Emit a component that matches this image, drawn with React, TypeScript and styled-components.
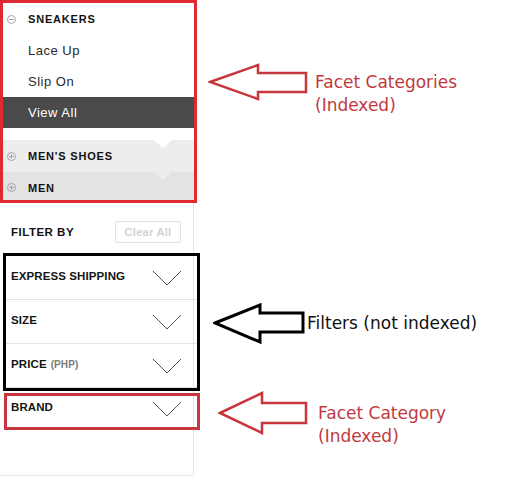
import React from 'react';
import styled, { createGlobalStyle } from 'styled-components';

const GlobalStyle = createGlobalStyle`
  html, body {
    margin: 0;
    padding: 0;
    background: #fff;
  }
  body {
    font-family: "Liberation Sans", Arial, sans-serif;
  }
`;

const Page = styled.div`
  display: flex;
  width: 520px;
  height: 482px;
  overflow: hidden;
  background: #fff;
`;

const Sidebar = styled.div`
  width: 200px;
  flex-shrink: 0;
  display: flex;
  flex-direction: column;
`;

const CategoryBox = styled.div`
  width: 197px;
  height: 203px;
  box-sizing: border-box;
  border: 3px solid #dd2a33;
  display: flex;
  flex-direction: column;
`;

const CategoryHead = styled.div<{ $bg: string; $h: number; $notch?: string; $top?: number }>`
  position: relative;
  display: flex;
  align-items: center;
  height: ${p => p.$h}px;
  padding: ${p => p.$top ?? 0}px 0 0 4px;
  box-sizing: border-box;
  background: ${p => p.$bg};
  color: #111;
  font-size: 11px;
  font-weight: bold;
  letter-spacing: 0.8px;

  &::before {
    content: '';
    display: ${p => (p.$notch ? 'block' : 'none')};
    position: absolute;
    top: 0;
    left: 151px;
    border-left: 9px solid transparent;
    border-right: 9px solid transparent;
    border-top: 8px solid ${p => p.$notch};
  }
`;

const Toggle = styled.svg`
  width: 9px;
  height: 9px;
  margin-right: 12px;
  flex-shrink: 0;
`;

const SubItem = styled.div<{ $active?: boolean }>`
  display: flex;
  align-items: center;
  height: 31px;
  padding-left: 25px;
  font-size: 13px;
  letter-spacing: 0.5px;
  color: ${p => (p.$active ? '#fff' : '#2a2a2a')};
  background: ${p => (p.$active ? '#4a4a4a' : 'transparent')};
`;

const CollapsedGroup = styled.div`
  margin-top: 12px;
  display: flex;
  flex-direction: column;
`;

const FilterPanel = styled.div`
  width: 194px;
  height: 273px;
  box-sizing: border-box;
  border-right: 1px solid #e6e6e6;
  border-bottom: 1px solid #e6e6e6;
`;

const FilterHeader = styled.div`
  display: flex;
  align-items: center;
  justify-content: space-between;
  padding: 18px 12px 10px 11px;
`;

const FilterTitle = styled.span`
  font-size: 11.5px;
  font-weight: bold;
  letter-spacing: 0.5px;
  color: #111;
`;

const ClearAll = styled.button`
  width: 66px;
  height: 22px;
  box-sizing: border-box;
  border: 1px solid #e2e2e2;
  background: #fff;
  color: #d2d2d2;
  font-family: "Liberation Sans", Arial, sans-serif;
  font-size: 11px;
  font-weight: bold;
  letter-spacing: 0.3px;
  padding: 0;
`;

const Highlight = styled.div<{ $color: string; $w: number; $left: number; $top?: number }>`
  width: ${p => p.$w}px;
  margin: ${p => p.$top ?? 0}px 0 0 ${p => p.$left}px;
  box-sizing: border-box;
  border: 3px solid ${p => p.$color};
`;

const FilterRow = styled.div<{ $h: number; $pad: number; $line?: boolean }>`
  display: flex;
  align-items: center;
  justify-content: space-between;
  height: ${p => p.$h}px;
  box-sizing: border-box;
  padding: 0 15px 0 ${p => p.$pad}px;
  border-bottom: ${p => (p.$line ? '1px solid #e3e3e3' : 'none')};
`;

const FilterLabel = styled.span<{ $lift: number }>`
  margin-bottom: ${p => p.$lift}px;
  font-size: 11.5px;
  font-weight: bold;
  letter-spacing: 0.1px;
  color: #151515;
`;

const Unit = styled.span`
  font-size: 10px;
  color: #7a7a7a;
  margin-left: 4px;
`;

const Chevron = styled.svg<{ $lift?: number }>`
  width: 30px;
  height: 16px;
  margin-bottom: ${p => p.$lift ?? 0}px;
`;

const Notes = styled.div`
  display: flex;
  flex-direction: column;
`;

const Note = styled.div<{ $top: number; $indent: number }>`
  display: flex;
  align-items: flex-start;
  margin: ${p => p.$top}px 0 0 ${p => p.$indent}px;
`;

const NoteText = styled.div<{ $color: string; $offset: number; $gap: number }>`
  margin: ${p => p.$offset}px 0 0 ${p => p.$gap}px;
  font-family: "DejaVu Sans", Verdana, sans-serif;
  font-size: 17px;
  line-height: 23px;
  color: ${p => p.$color};
  white-space: nowrap;
`;

const ToggleIcon = ({ open }: { open?: boolean }) => (
  <Toggle viewBox="0 0 9 9">
    <circle cx="4.5" cy="4.5" r="4" fill="none" stroke="#9a9a9a" strokeWidth="0.9" />
    <line x1="2.2" y1="4.5" x2="6.8" y2="4.5" stroke="#9a9a9a" strokeWidth="0.9" />
    {!open && <line x1="4.5" y1="2.2" x2="4.5" y2="6.8" stroke="#9a9a9a" strokeWidth="0.9" />}
  </Toggle>
);

const Down = ({ lift }: { lift?: number }) => (
  <Chevron viewBox="0 0 30 16" $lift={lift}>
    <polyline points="1,1 15,15 29,1" fill="none" stroke="#555" strokeWidth="1" />
  </Chevron>
);

const Arrow = ({ w, h, points, color, stroke }: { w: number; h: number; points: string; color: string; stroke: number }) => (
  <svg width={w} height={h} viewBox={`0 0 ${w} ${h}`}>
    <polygon points={points} fill="#fff" stroke={color} strokeWidth={stroke} strokeLinejoin="miter" />
  </svg>
);

const filters = [
  { label: 'EXPRESS SHIPPING' },
  { label: 'SIZE' },
  { label: 'PRICE', unit: '(PHP)' },
];

export default function App() {
  return (
    <>
      <GlobalStyle />
      <Page>
        <Sidebar>
          <CategoryBox>
            <CategoryHead $bg="#fff" $h={32}>
              <ToggleIcon open />
              SNEAKERS
            </CategoryHead>
            <SubItem>Lace Up</SubItem>
            <SubItem>Slip On</SubItem>
            <SubItem $active>View All</SubItem>
            <CollapsedGroup>
              <CategoryHead $bg="#ededed" $h={32} $notch="#fff">
                <ToggleIcon />
                MEN'S SHOES
              </CategoryHead>
              <CategoryHead $bg="#e3e3e3" $h={28} $notch="#ededed" $top={3}>
                <ToggleIcon />
                MEN
              </CategoryHead>
            </CollapsedGroup>
          </CategoryBox>

          <FilterPanel>
            <FilterHeader>
              <FilterTitle>FILTER BY</FilterTitle>
              <ClearAll>Clear All</ClearAll>
            </FilterHeader>
            <Highlight $color="#000" $w={197} $left={3}>
              {filters.map(f => (
                <FilterRow key={f.label} $h={44} $pad={5} $line>
                  <FilterLabel $lift={4}>
                    {f.label}
                    {f.unit && <Unit>{f.unit}</Unit>}
                  </FilterLabel>
                  <Down />
                </FilterRow>
              ))}
            </Highlight>
            <Highlight $color="#c4373e" $w={196} $left={4} $top={2}>
              <FilterRow $h={31} $pad={4}>
                <FilterLabel $lift={9}>BRAND</FilterLabel>
                <Down lift={6} />
              </FilterRow>
            </Highlight>
          </FilterPanel>
        </Sidebar>

        <Notes>
          <Note $top={62} $indent={8}>
            <Arrow w={100} h={40} color="#c8363d" stroke={2.5} points="2,20 50,3 50,11 98,11 98,30 50,30 50,37" />
            <NoteText $color="#bf3a40" $offset={8.5} $gap={7}>
              Facet Categories
              <br />
              (Indexed)
            </NoteText>
          </Note>
          <Note $top={186.5} $indent={13}>
            <Arrow w={93} h={41} color="#000" stroke={3} points="2,20 47,2 47,10 90,10 90,29 47,29 47,39" />
            <NoteText $color="#111" $offset={8.5} $gap={1}>
              Filters (not indexed)
            </NoteText>
          </Note>
          <Note $top={47} $indent={18}>
            <Arrow w={91} h={44} color="#c8363d" stroke={2.5} points="2,22 44,2 44,12 88,12 88,32 44,32 44,42" />
            <NoteText $color="#bf3a40" $offset={10.5} $gap={9}>
              Facet Category
              <br />
              (Indexed)
            </NoteText>
          </Note>
        </Notes>
      </Page>
    </>
  );
}
